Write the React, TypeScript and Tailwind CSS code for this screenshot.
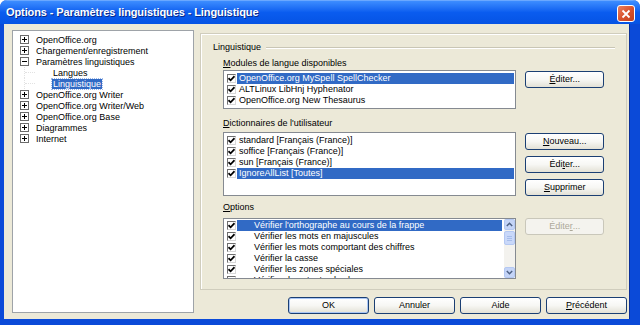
import React from 'react'

function Check() {
  return (
    <svg width="7" height="7" viewBox="0 0 7 7">
      <path d="M0.5 3.2 L2.6 5.3 L6.5 1.2" stroke="#000" strokeWidth="1.7" fill="none" />
    </svg>
  )
}

function CheckBox({ checked = true }: { checked?: boolean }) {
  return (
    <span className="w-[9px] h-[9px] shrink-0 bg-white border border-t-[#6f6f6f] border-l-[#6f6f6f] border-b-[#d8d8d8] border-r-[#d8d8d8] flex items-center justify-center">
      {checked && <Check />}
    </span>
  )
}

function Expander({ open = false }: { open?: boolean }) {
  return (
    <svg width="9" height="9" viewBox="0 0 9 9" className="shrink-0">
      <rect x="0.5" y="0.5" width="8" height="8" fill="#fff" stroke="#6b6b6b" />
      <path d="M2 4.5 H7" stroke="#000" />
      {!open && <path d="M4.5 2 V7" stroke="#000" />}
    </svg>
  )
}

function Btn({
  children,
  disabled = false,
  def = false,
  className = '',
}: {
  children: React.ReactNode
  disabled?: boolean
  def?: boolean
  className?: string
}) {
  const base = disabled
    ? 'border-[#c9c7ba] bg-[#f4f3ee] text-[#aca899]'
    : 'border-[#1b3f73] bg-gradient-to-b from-white via-[#f7f7f4] to-[#e3e1d6] text-black'
  return (
    <div
      className={`h-[17px] rounded-[3px] border flex items-center justify-center leading-none ${base} ${
        def ? 'shadow-[inset_0_0_0_1px_#a9c6f5]' : ''
      } ${className}`}
    >
      {children}
    </div>
  )
}

const U = ({ children }: { children: React.ReactNode }) => <span className="underline underline-offset-1">{children}</span>

function TreeRow({ label, open, selected, child }: { label: string; open?: boolean; selected?: boolean; child?: boolean }) {
  if (child) {
    return (
      <div className="h-[11px] flex items-center">
        <span className="w-[11px] ml-[11px] self-stretch border-l border-dotted border-[#e2e2e2] flex items-center">
          <span className="w-full border-t border-dotted border-[#e2e2e2]" />
        </span>
        <span className="w-[17px]" />
        <span className={`px-[1px] leading-[10px] ${selected ? 'bg-[#316ac5] text-white outline outline-1 outline-dotted outline-[#9db8e8]' : ''}`}>{label}</span>
      </div>
    )
  }
  return (
    <div className="h-[11px] flex items-center">
      <span className="w-[7px]" />
      <Expander open={open} />
      <span className="w-[7px]" />
      <span className="leading-[10px]">{label}</span>
    </div>
  )
}

function ListRow({ label, selected, gap = 2 }: { label: string; selected?: boolean; gap?: number }) {
  return (
    <div className="h-[11px] flex items-center">
      <CheckBox />
      <span className={`ml-[1px] flex-1 h-[11px] flex items-center ${selected ? 'bg-[#316ac5] text-white' : ''}`}>
        <span className={gap === 2 ? 'pl-[2px]' : 'pl-[17px]'}>{label}</span>
      </span>
    </div>
  )
}

export default function App() {
  return (
    <div className="w-[640px] h-[325px] flex flex-col overflow-hidden bg-[#0b4ad8] font-['Liberation_Sans',Arial,sans-serif] text-[9px] text-black rounded-t-[7px]">
      {/* Title bar */}
      <div className="h-[24px] shrink-0 flex items-center justify-between pl-[6px] pr-[5px] bg-gradient-to-b from-[#3d8dff] via-[#0a5cef] to-[#0653e4] border-t border-[#6aa8ff]">
        <span className="text-white font-bold text-[11px] tracking-[-0.1px] [text-shadow:1px_1px_0_#0a2a8a]">
          Options - Paramètres linguistiques - Linguistique
        </span>
        <div className="w-[18px] h-[17px] mt-[2px] rounded-[3px] border border-white bg-gradient-to-br from-[#e9805f] via-[#d9532e] to-[#c0401d] flex items-center justify-center">
          <svg width="10" height="10" viewBox="0 0 10 10">
            <path d="M1.5 1.5 L8.5 8.5 M8.5 1.5 L1.5 8.5" stroke="#fff" strokeWidth="1.8" />
          </svg>
        </div>
      </div>

      {/* Body */}
      <div className="flex-1 flex ml-[4px] mr-[10px] mb-[6px] bg-[#ece9d8] pl-[8px] pt-[6px] pr-[3px] gap-[6px] border-r border-[#0a2f9a]">
        {/* Tree */}
        <div className="w-[182px] h-[283px] shrink-0 bg-white border border-[#9ea3a8] pt-[3px]">
          <TreeRow label="OpenOffice.org" />
          <TreeRow label="Chargement/enregistrement" />
          <TreeRow label="Paramètres linguistiques" open />
          <TreeRow label="Langues" child />
          <TreeRow label="Linguistique" child selected />
          <TreeRow label="OpenOffice.org Writer" />
          <TreeRow label="OpenOffice.org Writer/Web" />
          <TreeRow label="OpenOffice.org Base" />
          <TreeRow label="Diagrammes" />
          <TreeRow label="Internet" />
        </div>

        {/* Right column */}
        <div className="w-[427px] flex flex-col pt-[3px]">
          <div className="h-[257px] border border-[#d0cdbd] shadow-[inset_1px_1px_0_#fff] pt-[8px] pl-[12px] pr-[11px]">
            <div className="h-[11px] flex items-center gap-[5px]">
              <span>Linguistique</span>
              <span className="flex-1 border-t border-[#c9c6b5] border-b border-b-white" />
            </div>

            <div className="pl-[10px] pr-[11px]">
              <div className="h-[11px] mt-[5px] mb-[1px] flex items-center">
                <span><U>M</U>odules de langue disponibles</span>
              </div>
              <div className="flex gap-[9px]">
                <div className="w-[295px] h-[39px] bg-white border border-[#858a91] pt-[2px] pl-[3px] pr-[1px]">
                  <ListRow label="OpenOffice.org MySpell SpellChecker" selected />
                  <ListRow label="ALTLinux LibHnj Hyphenator" />
                  <ListRow label="OpenOffice.org New Thesaurus" />
                </div>
                <div className="w-[79px] pt-[1px]">
                  <Btn><U>É</U>diter...</Btn>
                </div>
              </div>

              <div className="h-[11px] mt-[9px] mb-[3px] flex items-center">
                <span><U>D</U>ictionnaires de l'utilisateur</span>
              </div>
              <div className="flex gap-[9px]">
                <div className="w-[295px] h-[64px] bg-white border border-[#858a91] pt-[2px] pl-[3px] pr-[1px]">
                  <ListRow label="standard [Français (France)]" />
                  <ListRow label="soffice [Français (France)]" />
                  <ListRow label="sun [Français (France)]" />
                  <ListRow label="IgnoreAllList [Toutes]" selected />
                </div>
                <div className="w-[79px] flex flex-col gap-[6px] pt-[1px]">
                  <Btn><U>N</U>ouveau...</Btn>
                  <Btn>Édi<U>t</U>er...</Btn>
                  <Btn><U>S</U>upprimer</Btn>
                </div>
              </div>

              <div className="h-[11px] mt-[6px] mb-[5px] flex items-center">
                <span><U>O</U>ptions</span>
              </div>
              <div className="flex gap-[9px]">
                <div className="w-[295px] h-[61px] bg-white border border-[#858a91] pl-[3px] flex overflow-hidden">
                  <div className="flex-1 pt-[1px] pr-[2px]">
                    <ListRow label="Vérifier l'orthographe au cours de la frappe" selected gap={17} />
                    <ListRow label="Vérifier les mots en majuscules" gap={17} />
                    <ListRow label="Vérifier les mots comportant des chiffres" gap={17} />
                    <ListRow label="Vérifier la casse" gap={17} />
                    <ListRow label="Vérifier les zones spéciales" gap={17} />
                    <div className="h-[11px] flex items-center">
                      <CheckBox checked={false} />
                      <span className="pl-[18px]">Vérifier dans toutes les langues</span>
                    </div>
                  </div>
                  <div className="w-[11px] shrink-0 bg-[#f3f2ee] flex flex-col">
                    <div className="h-[11px] rounded-[2px] bg-[#c4d4f7] border border-[#b4c8f2] flex items-center justify-center">
                      <svg width="7" height="5" viewBox="0 0 7 5"><path d="M0.8 4 L3.5 1.3 L6.2 4" stroke="#4d6185" strokeWidth="1.5" fill="none" /></svg>
                    </div>
                    <div className="h-[14px] mt-[1px] rounded-[2px] bg-[#c9d8f9] border border-[#b4c8f2] flex flex-col items-center justify-center gap-[1px]">
                      <span className="w-[5px] h-px bg-[#a6bdeb]" />
                      <span className="w-[5px] h-px bg-[#a6bdeb]" />
                      <span className="w-[5px] h-px bg-[#a6bdeb]" />
                    </div>
                    <div className="flex-1" />
                    <div className="h-[11px] rounded-[2px] bg-[#c4d4f7] border border-[#b4c8f2] flex items-center justify-center">
                      <svg width="7" height="5" viewBox="0 0 7 5"><path d="M0.8 1 L3.5 3.7 L6.2 1" stroke="#4d6185" strokeWidth="1.5" fill="none" /></svg>
                    </div>
                  </div>
                </div>
                <div className="w-[79px]">
                  <Btn disabled>Édite<U>r</U>...</Btn>
                </div>
              </div>
            </div>
          </div>

          {/* Bottom buttons */}
          <div className="mt-[7px] flex justify-end gap-[5px] pl-[88px]">
            <Btn def className="w-[81px]">OK</Btn>
            <Btn className="w-[81px]">Annuler</Btn>
            <Btn className="w-[81px]">Aide</Btn>
            <Btn className="w-[81px]"><U>P</U>récédent</Btn>
          </div>
        </div>
      </div>
    </div>
  )
}
